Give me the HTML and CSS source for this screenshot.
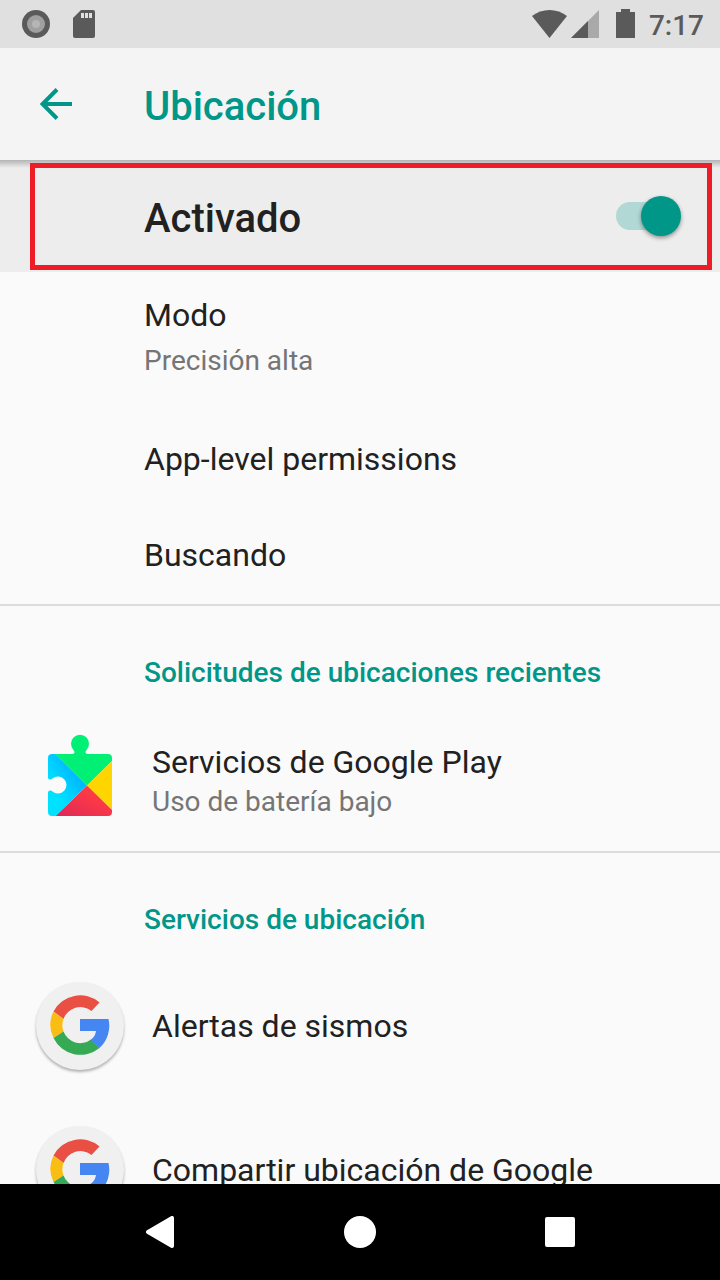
FILE: index.html
```html
<!doctype html>
<html lang="es">
  <head>
    <meta charset="utf-8" />
    <title>Ubicación</title>
    <meta name="viewport" content="width=device-width" />
    <link rel="stylesheet" href="styles.css">
  </head>

  <body>
    <div class="status">
      <svg class="status-record" width="28" height="28" viewBox="0 0 28 28">
        <circle cx="14" cy="14" r="14" fill="#5a5a5a" />
        <circle cx="14" cy="14" r="9" fill="#9f9f9f" />
        <circle cx="14" cy="14" r="4" fill="#b5b5b5" />
      </svg>
      <svg width="24" height="30" viewBox="0 0 24 30">
        <path d="M9 1h12a2 2 0 0 1 2 2v24a2 2 0 0 1-2 2H3a2 2 0 0 1-2-2V9z" fill="#5a5a5a" />
        <path d="M9 4h3v5H9zM13 4h3v5h-3zM17 4h3v5h-3z" fill="#e0e0e0" />
      </svg>
      <span class="status-space"></span>
      <svg width="35" height="28" viewBox="0 0 35 28">
        <path d="M0 6C10-2 25-2 35 6L17.5 28z" fill="#5a5a5a" />
      </svg>
      <svg class="status-signal" width="28" height="28" viewBox="0 0 28 28">
        <path d="M28 0v28H0z" fill="#a9a9a9" />
        <path d="M17 11v17H0z" fill="#5a5a5a" />
      </svg>
      <svg class="status-battery" width="19" height="30" viewBox="0 0 19 30">
        <path d="M5 0h9v3h5v26H0V3h5z" fill="#5a5a5a" />
      </svg>
      <time class="clock">7:17</time>
    </div>

    <header class="appbar">
      <a href="#" class="back" aria-label="Atrás">
        <svg width="32" height="32" viewBox="0 0 32 32">
          <path d="M32 16H3M17 1.5L2.500 16 17 30.5" fill="none" stroke="#009688" stroke-width="4" />
        </svg>
      </a>
      <h1>Ubicación</h1>
    </header>

    <div class="switchbar">
      <label for="location">Activado</label>
      <input type="checkbox" id="location" class="switch" checked />
    </div>

    <main>
      <section>
        <a href="#" class="item item-mode">
          <span class="title">Modo</span>
          <span class="summary">Precisión alta</span>
        </a>
        <a href="#" class="item"><span class="title">App-level permissions</span></a>
        <a href="#" class="item"><span class="title">Buscando</span></a>
      </section>

      <section>
        <h2>Solicitudes de ubicaciones recientes</h2>
        <a href="#" class="app">
          <span class="icon">
            <svg class="play" width="64" height="82" viewBox="0 0 64 82">
              <defs>
                <linearGradient id="blue" x1="1" y1="0" x2="0" y2="1">
                  <stop offset="0.3" stop-color="#00b8ff" />
                  <stop offset="0.7" stop-color="#00e1ff" />
                </linearGradient>
                <linearGradient id="red" x1="1" y1="0" x2="0" y2="1">
                  <stop offset="0.3" stop-color="#ff3a44" />
                  <stop offset="1" stop-color="#dc2858" />
                </linearGradient>
              </defs>
              <path d="M7.5 20H24c3 0 3-2 1.500-4A9 9 0 1 1 38.500 16C37 18 37 20 40 20h20a4 4 0 0 1 4 4v3L39 51.5z" fill="#00f076" />
              <path d="M64 27v49L39 51.5z" fill="#ffd500" />
              <path d="M39 51.5L64 76v2a4 4 0 0 1-4 4H7.5z" fill="url(#red)" />
              <path d="M7.5 20L39 51.5 7.5 82H4a4 4 0 0 1-4-4V58c1-2 3-2 4.500-.5a8.500 8.500 0 1 0 0-13C3 46 1 46 0 44V24a4 4 0 0 1 4-4z" fill="url(#blue)" />
            </svg>
          </span>
          <span class="text">
            <span class="title">Servicios de Google Play</span>
            <span class="summary">Uso de batería bajo</span>
          </span>
        </a>
      </section>

      <section>
        <h2>Servicios de ubicación</h2>
        <a href="#" class="app">
          <span class="icon round">
            <svg width="60" height="60" viewBox="-30 -30 60 60">
              <g id="google">
                <path d="M19.5-22.5A30 30 0 0 0-26.5-13.5L-16.5-6A17.8 17.8 0 0 1 11.5-14z" fill="#ea4f43" />
                <path d="M-26.5-13.5a30 30 0 0 0 0 26.5L-16.5 6.5a17.8 17.8 0 0 1 0-12.5z" fill="#fabd13" />
                <path d="M-26.5 13A30 30 0 0 0 19.5 23L11 14.5A17.8 17.8 0 0 1-16.5 6.5z" fill="#36a955" />
                <path d="M0-6H28.5A30 30 0 0 1 19.5 23L10.5 15C14 12.5 15.5 9.5 16 6H0z" fill="#4586f3" />
              </g>
            </svg>
          </span>
          <span class="title">Alertas de sismos</span>
        </a>
        <a href="#" class="app">
          <span class="icon round">
            <svg width="60" height="60" viewBox="-30 -30 60 60">
              <use href="#google" />
            </svg>
          </span>
          <span class="title">Compartir ubicación de Google</span>
        </a>
      </section>
    </main>

    <nav class="navbar">
      <button type="button" aria-label="Atrás">
        <svg width="32" height="32" viewBox="0 0 32 32">
          <path d="M4 16L28 2v28z" fill="#fff" stroke="#fff" stroke-width="4" stroke-linejoin="round" />
        </svg>
      </button>
      <button type="button" aria-label="Inicio">
        <svg width="32" height="32" viewBox="0 0 32 32">
          <circle cx="16" cy="16" r="16" fill="#fff" />
        </svg>
      </button>
      <button type="button" aria-label="Recientes">
        <svg width="32" height="32" viewBox="0 0 32 32">
          <rect x="1" y="1" width="30" height="30" rx="2" fill="#fff" />
        </svg>
      </button>
    </nav>
  </body>
</html>
```

FILE: styles.css
```css
* {
  box-sizing: border-box;
}
body {
  display: flex;
  flex-direction: column;
  height: 100vh;
  margin: 0;
  background: #fafafa;
  color: #212121;
  font-family: Roboto, sans-serif;
  font-size: 32px;
  line-height: 40px;
}
a {
  color: inherit;
  text-decoration: none;
}
svg {
  display: block;
}
h1,
h2 {
  margin: 0;
  color: #009688;
  font-weight: 500;
}

.status {
  display: flex;
  flex: none;
  align-items: center;
  height: 48px;
  padding: 0 16px 0 22px;
  background: #e0e0e0;
}
.status-record {
  margin-right: 22px;
}
.status-space {
  flex: 1;
}
.status-signal {
  margin-left: 4px;
}
.status-battery {
  margin: 0 14px 0 17px;
}
.clock {
  padding-top: 4px;
  color: #5a5a5a;
  font-size: 28px;
  font-weight: 500;
}

.appbar {
  display: flex;
  flex: none;
  align-items: center;
  height: 112px;
  background: #f4f4f4;
}
.back {
  width: 144px;
  padding-left: 40px;
}
h1 {
  padding-top: 6px;
  font-size: 40px;
}

/* the gradient is the app bar's shadow */
.switchbar {
  position: relative;
  display: flex;
  flex: none;
  align-items: center;
  justify-content: space-between;
  height: 112px;
  padding: 0 39px 0 144px;
  background: linear-gradient(#b4b4b4, #ededed 8px);
}
.switchbar label {
  padding-top: 6px;
  font-size: 40px;
  font-weight: 500;
}
/* highlight frame around the switch */
.switchbar::after {
  content: '';
  position: absolute;
  inset: 3px 8px 2px 30px;
  border: solid 5px #ee1c25;
  pointer-events: none;
}
.switch {
  display: grid;
  align-items: center;
  width: 65px;
  height: 40px;
  margin: 0;
  appearance: none;
}
.switch::before,
.switch::after {
  content: '';
  grid-area: 1 / 1;
}
.switch::before {
  width: 60px;
  height: 28px;
  border-radius: 14px;
  background: #b1d8d4;
}
.switch::after {
  justify-self: start;
  width: 40px;
  height: 40px;
  border-radius: 50%;
  background: #009688;
  box-shadow: 0 2px 4px rgba(0, 0, 0, 0.4);
}
.switch:checked::after {
  justify-self: end;
}

main {
  flex: 1;
  min-height: 0;
  overflow: hidden;
}
section + section {
  border-top: solid 2px #dcdcdc;
}
.title,
.summary {
  display: block;
}
.summary {
  color: #757575;
  font-size: 28px;
}
.item {
  display: block;
  padding: 27px 32px 29px 144px;
}
.item-mode {
  padding: 23px 32px 31px 144px;
}
.item-mode .summary {
  padding-top: 6px;
}
h2 {
  padding: 47px 32px 14px 144px;
  font-size: 28px;
}
.app {
  display: flex;
  align-items: center;
  height: 144px;
  padding: 0 32px 0 36px;
}
.text {
  padding-top: 5px;
}
.icon {
  display: flex;
  flex: none;
  align-items: center;
  justify-content: center;
  width: 88px;
  height: 88px;
  margin-right: 28px;
}
.play {
  margin-bottom: 8px;
}
.round {
  padding-bottom: 2px;
  border-radius: 50%;
  background: #f0f0f0;
  box-shadow: 0 2px 3px rgba(0, 0, 0, 0.3);
}

.navbar {
  display: flex;
  flex: none;
  height: 96px;
  padding: 0 60px;
  background: #000;
}
.navbar button {
  display: flex;
  flex: 1;
  align-items: center;
  justify-content: center;
  padding: 0;
  border: 0;
  background: none;
}
```
